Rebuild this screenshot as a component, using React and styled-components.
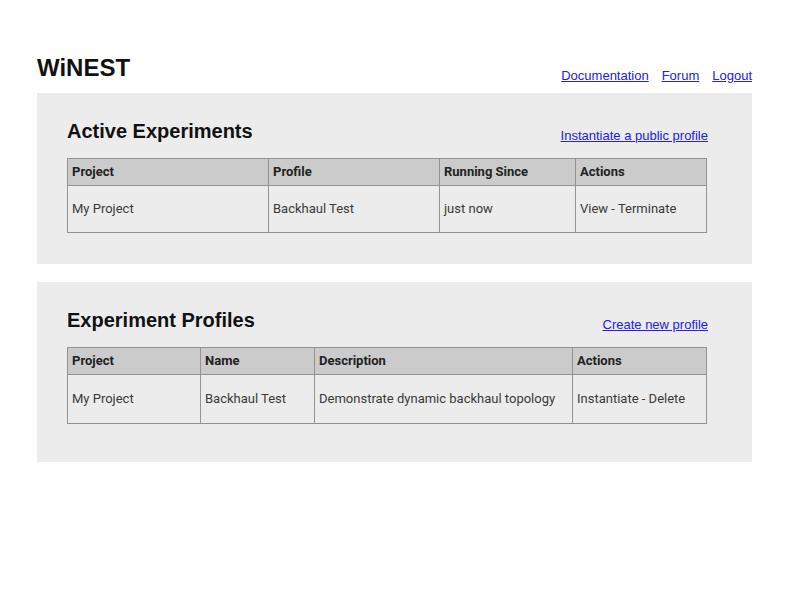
import styled, { createGlobalStyle } from "styled-components";

const GlobalStyle = createGlobalStyle`
  html, body {
    margin: 0;
    padding: 0;
    background: #ffffff;
  }
  body {
    font-family: "Liberation Sans", Arial, sans-serif;
    color: #111;
  }
`;

const Page = styled.div`
  padding: 53px 48px 40px 37px;
`;

const Header = styled.header`
  display: flex;
  justify-content: space-between;
  align-items: flex-end;
  height: 30px;
  margin-bottom: 10px;
`;

const Brand = styled.h1`
  margin: 0 0 1px 0;
  font-size: 24px;
  line-height: 28px;
  font-weight: bold;
  color: #111;
`;

const Nav = styled.nav`
  display: flex;
  gap: 13px;
  font-size: 13px;
  line-height: 15px;
`;

const Link = styled.a`
  color: #2020f0;
  text-decoration: underline;
  font-family: "Liberation Sans", Arial, sans-serif;
  font-size: 13px;
  line-height: 15px;
  cursor: pointer;
`;

const Panel = styled.section`
  background: #ececec;
  padding: 27px 44px ${(p) => p.$bottom}px 30px;
  margin-bottom: 18px;
`;

const PanelHead = styled.div`
  display: flex;
  justify-content: space-between;
  align-items: flex-end;
  margin-bottom: ${(p) => p.$gap}px;
`;

const Title = styled.h2`
  margin: 0;
  font-size: 20px;
  line-height: 23px;
  font-weight: bold;
  color: #111;
`;

const Table = styled.table`
  width: 639px;
  table-layout: fixed;
  border-collapse: collapse;
  font-family: Roboto, "Liberation Sans", sans-serif;
  font-size: 13px;
  line-height: 16px;
`;

const Th = styled.th`
  background: #cbcbcb;
  border: 1px solid #939393;
  padding: 5px 4px;
  text-align: left;
  font-weight: bold;
  color: #222;
`;

const Td = styled.td`
  border: 1px solid #939393;
  padding: ${(p) => p.$pad}px 4px;
  color: #3a3a3a;
  vertical-align: middle;
  white-space: nowrap;
`;

function DataTable({ columns, rows, pad }) {
  return (
    <Table>
      <colgroup>
        {columns.map((c) => (
          <col key={c.label} style={{ width: c.width }} />
        ))}
      </colgroup>
      <thead>
        <tr>
          {columns.map((c) => (
            <Th key={c.label}>{c.label}</Th>
          ))}
        </tr>
      </thead>
      <tbody>
        {rows.map((row, i) => (
          <tr key={i}>
            {row.map((cell, j) => (
              <Td key={j} $pad={pad}>
                {cell}
              </Td>
            ))}
          </tr>
        ))}
      </tbody>
    </Table>
  );
}

const experimentCols = [
  { label: "Project", width: 201 },
  { label: "Profile", width: 171 },
  { label: "Running Since", width: 136 },
  { label: "Actions", width: 131 },
];

const profileCols = [
  { label: "Project", width: 133 },
  { label: "Name", width: 114 },
  { label: "Description", width: 258 },
  { label: "Actions", width: 134 },
];

export default function App() {
  return (
    <>
      <GlobalStyle />
      <Page>
        <Header>
          <Brand>WiNEST</Brand>
          <Nav>
            <Link>Documentation</Link>
            <Link>Forum</Link>
            <Link>Logout</Link>
          </Nav>
        </Header>

        <Panel $bottom={31}>
          <PanelHead $gap={15}>
            <Title>Active Experiments</Title>
            <Link>Instantiate a public profile</Link>
          </PanelHead>
          <DataTable
            columns={experimentCols}
            pad={15}
            rows={[["My Project", "Backhaul Test", "just now", "View - Terminate"]]}
          />
        </Panel>

        <Panel $bottom={38}>
          <PanelHead $gap={15}>
            <Title>Experiment Profiles</Title>
            <Link>Create new profile</Link>
          </PanelHead>
          <DataTable
            columns={profileCols}
            pad={16}
            rows={[
              [
                "My Project",
                "Backhaul Test",
                "Demonstrate dynamic backhaul topology",
                "Instantiate - Delete",
              ],
            ]}
          />
        </Panel>
      </Page>
    </>
  );
}
